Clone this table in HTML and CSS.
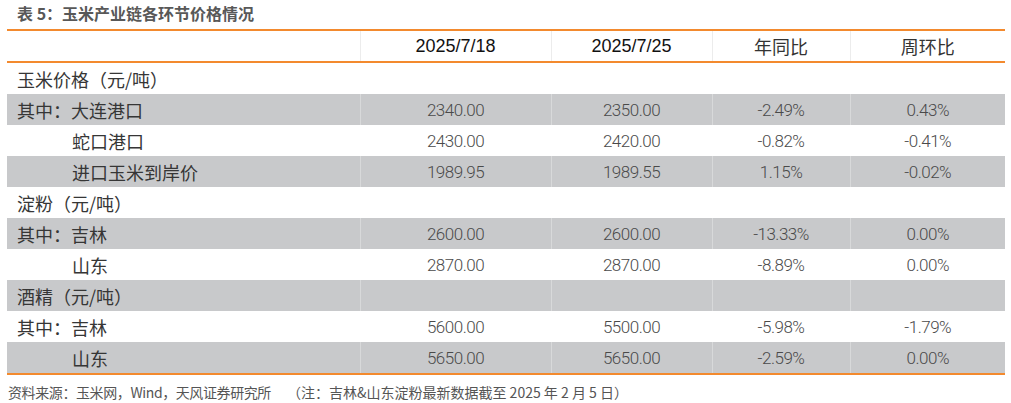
FILE: index.html
```html
<!DOCTYPE html>
<html lang="zh">
<head>
<meta charset="utf-8">
<title>表 5：玉米产业链各环节价格情况</title>
<link rel="stylesheet" href="styles.css">
</head>
<body>
<div class="page">
  <div class="title">表 5：玉米产业链各环节价格情况</div>
  <table class="tbl">
    <colgroup>
      <col class="c1"><col class="c2"><col class="c3"><col class="c4"><col class="c5">
    </colgroup>
    <thead>
      <tr>
        <th></th>
        <th class="date">2025/7/18</th>
        <th class="date">2025/7/25</th>
        <th class="cn">年同比</th>
        <th class="cn">周环比</th>
      </tr>
    </thead>
    <tbody>
      <tr><td class="lbl">玉米价格（元/吨）</td><td></td><td></td><td></td><td></td></tr>
      <tr class="g"><td class="lbl">其中：大连港口</td><td class="n">2340.00</td><td class="n">2350.00</td><td class="n">-2.49%</td><td class="n">0.43%</td></tr>
      <tr><td class="lbl sub">蛇口港口</td><td class="n">2430.00</td><td class="n">2420.00</td><td class="n">-0.82%</td><td class="n">-0.41%</td></tr>
      <tr class="g"><td class="lbl sub">进口玉米到岸价</td><td class="n">1989.95</td><td class="n">1989.55</td><td class="n">1.15%</td><td class="n">-0.02%</td></tr>
      <tr><td class="lbl">淀粉（元/吨）</td><td></td><td></td><td></td><td></td></tr>
      <tr class="g"><td class="lbl">其中：吉林</td><td class="n">2600.00</td><td class="n">2600.00</td><td class="n">-13.33%</td><td class="n">0.00%</td></tr>
      <tr><td class="lbl sub">山东</td><td class="n">2870.00</td><td class="n">2870.00</td><td class="n">-8.89%</td><td class="n">0.00%</td></tr>
      <tr class="g"><td class="lbl">酒精（元/吨）</td><td></td><td></td><td></td><td></td></tr>
      <tr><td class="lbl">其中：吉林</td><td class="n">5600.00</td><td class="n">5500.00</td><td class="n">-5.98%</td><td class="n">-1.79%</td></tr>
      <tr class="g last"><td class="lbl sub">山东</td><td class="n">5650.00</td><td class="n">5650.00</td><td class="n">-2.59%</td><td class="n">0.00%</td></tr>
    </tbody>
  </table>
  <div class="source"><span class="src">资料来源：玉米网，Wind，天风证券研究所</span><span class="gap"></span><span class="note">（注：吉林&amp;山东淀粉最新数据截至 2025 年 2 月 5 日）</span></div>
</div>
</body>
</html>
```
FILE: styles.css
```css
html, body {
  margin: 0;
  padding: 0;
  background: #ffffff;
}
.page {
  width: 1011px;
  padding-left: 7px;
  box-sizing: border-box;
  font-family: "Noto Sans CJK SC", "Liberation Sans", sans-serif;
}
.title {
  height: 29px;
  line-height: 27px;
  padding-left: 10px;
  font-size: 16px;
  font-weight: 700;
  color: #585858;
  white-space: pre;
}
.tbl {
  width: 998px;
  border-collapse: collapse;
  table-layout: fixed;
  border-top: 2px solid #f38a2e;
  border-bottom: 2px solid #f38a2e;
}
.c1 { width: 353px; }
.c2 { width: 191px; }
.c3 { width: 161px; }
.c4 { width: 138px; }
.c5 { width: 155px; }
.tbl th {
  height: 30px;
  padding: 0;
  font-weight: 400;
  text-align: center;
  border-bottom: 2px solid #f38a2e;
  border-left: 1px solid #ececec;
}
.tbl th:first-child { border-left: none; }
.tbl .date {
  font-family: "Liberation Sans", sans-serif;
  font-size: 18px;
  color: #111111;
}
.tbl .cn {
  font-family: "Noto Sans CJK SC", sans-serif;
  font-size: 18px;
  color: #333333;
}
.tbl td {
  height: 31px;
  padding: 0;
  border-left: 1px solid rgba(255, 255, 255, 0.3);
  white-space: nowrap;
}
.tbl td:first-child { border-left: none; }
.tbl tr.g td { background: #c8c9cb; }
.lbl {
  padding-left: 10px !important;
  font-size: 18px;
  color: #363636;
  font-weight: 400;
}
.lbl.sub { padding-left: 65px !important; }
.n {
  text-align: center;
  font-family: "Roboto", "Liberation Sans", sans-serif;
  font-weight: 300;
  font-size: 17px;
  letter-spacing: -0.5px;
  color: #4a4a4a;
}
.source {
  padding-top: 7px;
  padding-left: 1px;
  font-size: 14px;
  color: #555555;
  white-space: pre;
}
.src { letter-spacing: -0.4px; }
.note { letter-spacing: 0; }
.gap {
  display: inline-block;
  width: 16px;
}
```
